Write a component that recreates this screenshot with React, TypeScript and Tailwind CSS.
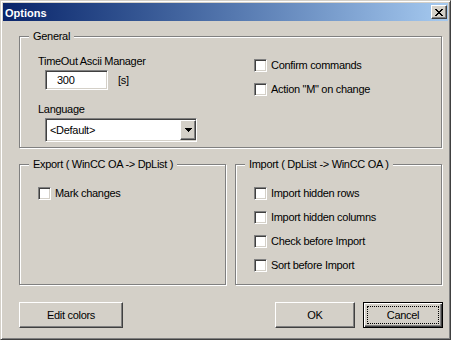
import React from 'react'

const raised =
  'border border-t-white border-l-white border-r-[#404040] border-b-[#404040] shadow-[inset_-1px_-1px_#808080] bg-[#d4d0c8]'
const sunken =
  'border border-t-[#808080] border-l-[#808080] border-r-white border-b-white shadow-[inset_1px_1px_#404040,inset_-1px_-1px_#d4d0c8] bg-white'

function CheckBox({ label }: { label: string }) {
  return (
    <div className="flex h-[13px] items-center">
      <span className={`h-[13px] w-[13px] shrink-0 ${sunken}`} />
      <span className="ml-[4px] whitespace-nowrap leading-[13px]">{label}</span>
    </div>
  )
}

function GroupBox({
  title,
  className,
  children,
}: {
  title: string
  className: string
  children: React.ReactNode
}) {
  return (
    <div className={`relative border border-[#808080] shadow-[inset_1px_1px_#fff,1px_1px_#fff] ${className}`}>
      <span className="absolute left-[9px] top-[-7px] whitespace-nowrap bg-[#d4d0c8] px-[4px] leading-[13px]">
        {title}
      </span>
      {children}
    </div>
  )
}

function Button({ label, width }: { label: string; width: string }) {
  return (
    <div className={`flex h-[26px] items-center justify-center leading-[13px] ${width} ${raised}`}>{label}</div>
  )
}

export default function App() {
  return (
    <div className="h-[340px] w-[451px] border border-t-[#d4d0c8] border-l-[#d4d0c8] border-r-[#404040] border-b-[#404040] bg-[#d4d0c8] p-[2px] font-['Liberation_Sans',Arial,sans-serif] text-[11px] tracking-[-0.3px] text-black shadow-[inset_1px_1px_#fff,inset_-1px_-1px_#808080]">
      {/* title bar */}
      <div className="flex h-[18px] items-start bg-gradient-to-r from-[#0a246a] to-[#a6caf0]">
        <span className="ml-[2px] mt-[4px] font-bold leading-[13px] tracking-normal text-white">Options</span>
        <div className={`ml-auto mr-[1px] mt-[2px] flex h-[14px] w-[16px] items-center justify-center ${raised}`}>
          <svg width="8" height="7" viewBox="0 0 8 7" shapeRendering="crispEdges">
            <path
              d="M0 0h2v1H0zM6 0h2v1H6zM1 1h2v1H1zM5 1h2v1H5zM2 2h4v1H2zM3 3h2v1H3zM2 4h4v1H2zM1 5h2v1H1zM5 5h2v1H5zM0 6h2v1H0zM6 6h2v1H6z"
              fill="#000"
            />
          </svg>
        </div>
      </div>

      <div className="pl-[16px] pt-[15px]">
        <GroupBox title="General" className="flex h-[112px] w-[423px]">
          <div className="w-[234px] pl-[18px] pt-[18px]">
            <p className="leading-[13px]">TimeOut Ascii Manager</p>
            <div className="mt-[2px] flex items-center">
              <div className={`ml-[7px] flex h-[20px] w-[63px] items-center pl-[11px] leading-[13px] ${sunken}`}>300</div>
              <span className="ml-[10px] leading-[13px]">[s]</span>
            </div>
            <p className="mt-[13px] leading-[13px]">Language</p>
            <div className={`ml-[7px] mt-[2px] flex h-[24px] w-[152px] items-center ${sunken}`}>
              <span className="flex-1 pl-[4px] leading-[13px]">&lt;Default&gt;</span>
              <div className={`flex h-[20px] w-[16px] items-center justify-center ${raised}`}>
                <svg width="7" height="4" viewBox="0 0 7 4" shapeRendering="crispEdges">
                  <path d="M0 0h7v1H0zM1 1h5v1H1zM2 2h3v1H2zM3 3h1v1H3z" fill="#000" />
                </svg>
              </div>
            </div>
          </div>
          <div className="flex flex-col gap-[11px] pt-[22px]">
            <CheckBox label="Confirm commands" />
            <CheckBox label={'Action "M" on change'} />
          </div>
        </GroupBox>

        <div className="mt-[16px] flex gap-[9px]">
          <GroupBox title="Export ( WinCC OA -> DpList )" className="h-[121px] w-[207px]">
            <div className="flex flex-col gap-[11px] pl-[18px] pt-[22px]">
              <CheckBox label="Mark changes" />
            </div>
          </GroupBox>
          <GroupBox title="Import ( DpList -> WinCC OA )" className="h-[121px] w-[207px]">
            <div className="flex flex-col gap-[11px] pl-[18px] pt-[22px]">
              <CheckBox label="Import hidden rows" />
              <CheckBox label="Import hidden columns" />
              <CheckBox label="Check before Import" />
              <CheckBox label="Sort before Import" />
            </div>
          </GroupBox>
        </div>

        <div className="mt-[17px] flex w-[424px] justify-between">
          <Button label="Edit colors" width="w-[104px]" />
          <div className="flex gap-[8px]">
            <Button label="OK" width="w-[80px]" />
            <div className="relative flex h-[26px] w-[80px] items-center justify-center border border-black leading-[13px] shadow-[inset_1px_1px_#fff,inset_-1px_-1px_#404040,inset_-2px_-2px_#808080]">
              <span className="absolute inset-[3px] border border-dotted border-black" />
              Cancel
            </div>
          </div>
        </div>
      </div>
    </div>
  )
}
